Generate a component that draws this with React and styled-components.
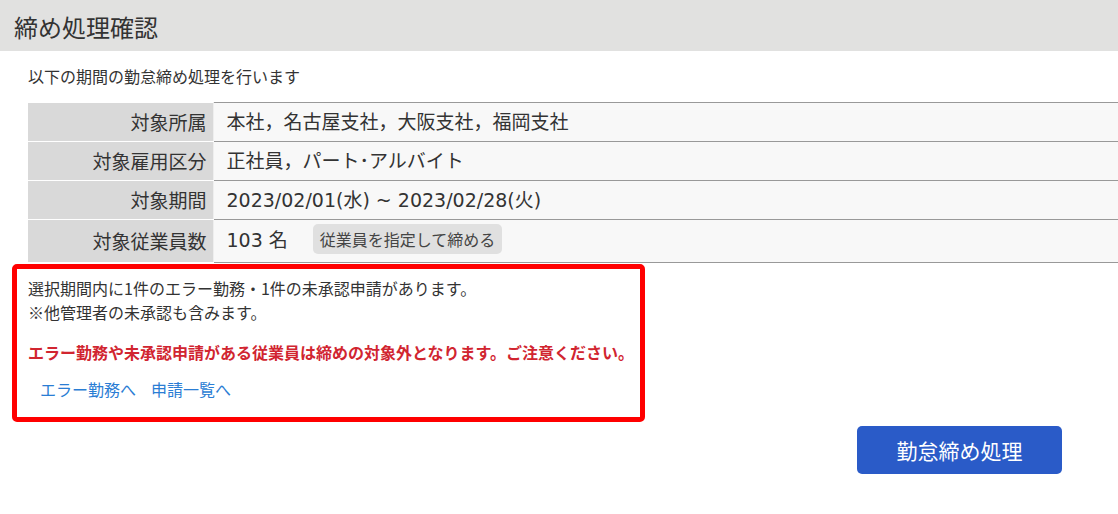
import React from "react";
import styled, { createGlobalStyle } from "styled-components";

const rows = [
  { label: "対象所属", value: "本社，名古屋支社，大阪支社，福岡支社" },
  { label: "対象雇用区分", value: "正社員，パート･アルバイト" },
  { label: "対象期間", value: "2023/02/01(水) ~ 2023/02/28(火)" },
];

const GlobalStyle = createGlobalStyle`
  body {
    margin: 0;
    background: #fff;
    color: #333;
    font-family: "Noto Sans CJK JP", "Noto Sans", sans-serif;
  }
`;

const App = () => {
  return (
    <Page>
      <GlobalStyle />
      <Header>締め処理確認</Header>
      <Lead>以下の期間の勤怠締め処理を行います</Lead>

      <Table>
        <tbody>
          {rows.map((row) => (
            <tr key={row.label}>
              <Label>{row.label}</Label>
              <Value>{row.value}</Value>
            </tr>
          ))}
          <tr>
            <Label>対象従業員数</Label>
            <Value tall>
              103 名
              <SubButton>従業員を指定して締める</SubButton>
            </Value>
          </tr>
        </tbody>
      </Table>

      <Notice>
        <NoticeLine>選択期間内に1件のエラー勤務・1件の未承認申請があります。</NoticeLine>
        <NoticeLine>※他管理者の未承認も含みます。</NoticeLine>
        <Warning>エラー勤務や未承認申請がある従業員は締めの対象外となります。ご注意ください。</Warning>
        <Links>
          <TextLink href="#">エラー勤務へ</TextLink>
          <TextLink href="#">申請一覧へ</TextLink>
        </Links>
      </Notice>

      <Actions>
        <PrimaryButton>勤怠締め処理</PrimaryButton>
      </Actions>
    </Page>
  );
};

const Page = styled.div`
  width: 1118px;
  height: 514px;
  overflow: hidden;
`;

const Header = styled.h1`
  margin: 0;
  height: 51px;
  padding-left: 14px;
  background: #e1e1e0;
  font-size: 24px;
  font-weight: normal;
  line-height: 53px;
  color: #333;
`;

const Lead = styled.p`
  margin: 14px 0 0 28px;
  font-size: 16px;
  line-height: 22px;
`;

const Table = styled.table`
  margin: 15px 0 0 28px;
  width: 1090px;
  border-collapse: collapse;
  font-size: 19px;
`;

const Label = styled.th`
  width: 185px;
  box-sizing: border-box;
  padding: 0 6px 0 0;
  background: #d9d9d9;
  border-top: 1px solid #fff;
  border-bottom: 1px solid #fff;
  border-right: 1px solid #eee;
  text-align: right;
  font-weight: normal;
  height: 38px;
  line-height: 38px;
`;

const Value = styled.td`
  padding: 0 0 0 13px;
  background: #f8f8f8;
  border-top: 1px solid #999;
  border-bottom: 1px solid #999;
  height: ${(p) => (p.tall ? "42px" : "38px")};
  font-family: "DejaVu Sans", "Noto Sans CJK JP", sans-serif;
  line-height: 24px;
  white-space: nowrap;
`;

const SubButton = styled.button`
  margin-left: 25px;
  height: 30px;
  padding: 0 7px;
  border: none;
  border-radius: 5px;
  background: #e0e0e0;
  color: #444;
  font-family: "Noto Sans CJK JP", sans-serif;
  font-size: 16px;
  line-height: 30px;
  vertical-align: middle;
  position: relative;
  top: -2px;
`;

const Notice = styled.div`
  margin: 1px 0 0 12px;
  width: 633px;
  height: 158px;
  box-sizing: border-box;
  padding: 7px 11px 0;
  border: 5px solid #ff0000;
  border-radius: 5px;
`;

const NoticeLine = styled.p`
  margin: 0;
  font-size: 16px;
  line-height: 24px;
`;

const Warning = styled.p`
  margin: 16px 0 0;
  font-size: 16px;
  font-weight: bold;
  line-height: 24px;
  color: #d12530;
  white-space: nowrap;
`;

const Links = styled.div`
  display: flex;
  gap: 15px;
  margin: 13px 0 0 12px;
`;

const TextLink = styled.a`
  font-size: 16px;
  line-height: 24px;
  color: #2a7dd4;
  text-decoration: none;
`;

const Actions = styled.div`
  display: flex;
  justify-content: flex-end;
  padding: 4px 56px 0 0;
`;

const PrimaryButton = styled.button`
  width: 205px;
  height: 48px;
  border: none;
  border-radius: 5px;
  background: #2a5bc8;
  color: #fff;
  font-family: inherit;
  font-size: 21px;
`;

export default App;
